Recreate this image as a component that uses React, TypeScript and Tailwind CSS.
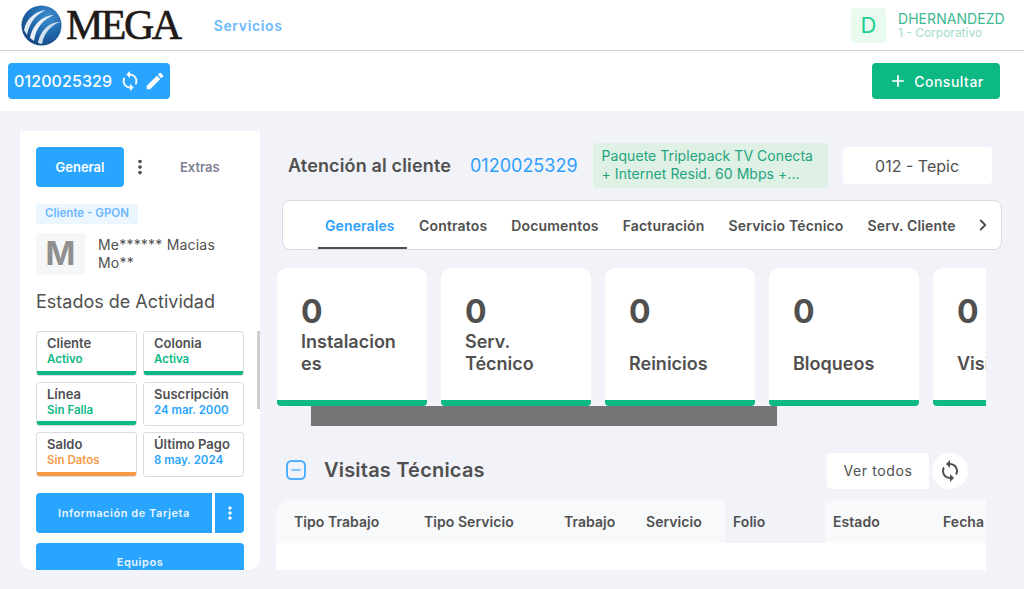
import React from "react";
import { MdSync, MdEdit, MdMoreVert, MdAdd } from "react-icons/md";
import { ChevronRight } from "lucide-react";

function Logo() {
  return (
    <div className="flex items-center">
      <svg width="41" height="41" viewBox="0 0 41 41" className="shrink-0">
        <defs>
          <radialGradient id="g" cx="0.65" cy="0.3" r="0.85">
            <stop offset="0" stopColor="#3f8fd0" />
            <stop offset="0.55" stopColor="#1e63a8" />
            <stop offset="1" stopColor="#123a72" />
          </radialGradient>
        </defs>
        <circle cx="20.5" cy="20.5" r="20" fill="url(#g)" />
        <path d="M3 25C5 15 13 6 25 5C16 9 9 16 6 30Z" fill="#dfe9f3" />
        <path d="M9 33C11 22 19 11 33 10C23 14 15 22 13 36Z" fill="#e8eff6" />
        <path d="M17 38C19 27 27 17 39 17C30 20 23 28 21 39Z" fill="#cfdfee" />
      </svg>
      <span className="ml-[4px] text-[42px] leading-none tracking-[-2.5px] text-[#1f1a17] font-['Liberation_Serif',serif] [-webkit-text-stroke:0.6px_#1f1a17]">MEGA</span>
    </div>
  );
}

function Status({ title, value, color, bar }: { title: string; value: string; color: string; bar?: string }) {
  return (
    <div className="relative h-full overflow-hidden rounded-[3px] border border-[#d8dce3] bg-white pl-[10px] pt-[2px]">
      <div className="text-[13px] font-semibold leading-[18px] text-[#4f5054]">{title}</div>
      <div className={`text-[11.5px] font-semibold leading-[15px] ${color}`}>{value}</div>
      {bar && <div className={`absolute inset-x-0 bottom-0 h-[4px] ${bar}`} />}
    </div>
  );
}

function Card({ n, lines }: { n: string; lines: string[] }) {
  return (
    <div className="flex h-[138px] w-[150px] shrink-0 flex-col overflow-hidden rounded-t-[10px] rounded-b-[4px] bg-white">
      <div className="flex-1 pl-[24px] pt-[26px]">
        <div className="text-[32px] font-bold leading-[36px] text-[#505050]">{n}</div>
        <div className="mt-[1px] h-[44px] text-[18px] font-semibold leading-[22px] text-[#505050]">
          {lines.map((l, i) => (
            <div key={i}>{l || "\u00a0"}</div>
          ))}
        </div>
      </div>
      <div className="h-[6px] shrink-0 bg-[#0cb884]" />
    </div>
  );
}

const tabs = ["Contratos", "Documentos", "Facturación", "Servicio Técnico", "Serv. Cliente"];
const cols: [string, string][] = [
  ["Tipo Trabajo", "w-[130px] pl-[18px] bg-[#f8f9fa] rounded-tl-[14px]"],
  ["Tipo Servicio", "w-[140px] pl-[18px] bg-[#f8f9fa]"],
  ["Trabajo", "w-[82px] pl-[18px] bg-[#f8f9fa]"],
  ["Servicio", "w-[97px] pl-[18px] bg-[#f8f9fa]"],
  ["Folio", "w-[100px] pl-[8px]"],
  ["Estado", "w-[110px] pl-[8px] bg-[#f8f9fa]"],
  ["Fecha", "w-[51px] pl-[8px] bg-[#f8f9fa]"],
];

export default function App() {
  return (
    <div className="flex h-[589px] w-[1024px] flex-col overflow-hidden bg-[#f1f3f8] font-['Inter',sans-serif]">
      <header className="flex h-[51px] shrink-0 items-center border-b border-[#ccd3da] bg-white pl-[21px] pr-[18px]">
        <Logo />
        <span className="ml-[34px] text-[14px] font-semibold tracking-[0.65px] text-[#69b9ff]">Servicios</span>
        <div className="ml-auto flex items-center">
          <div className="flex h-[35px] w-[35px] items-center justify-center rounded-[4px] bg-[#e8fbee] text-[22px] text-[#1fcf92]">D</div>
          <div className="ml-[12px] w-[108px]">
            <div className="text-[14px] leading-[15px] tracking-[0.05px] text-[#3eb795]">DHERNANDEZD</div>
            <div className="text-[12px] leading-[14px] text-[#a2dcc6]">1 - Corporativo</div>
          </div>
        </div>
      </header>

      <div className="flex h-[60px] shrink-0 items-center justify-between bg-white pl-[8px] pr-[24px]">
        <div className="flex h-[36px] w-[162px] items-center rounded-[4px] bg-[#29a4ff] pl-[6px] text-white">
          <span className="text-[16px] font-medium tracking-[0.1px]">0120025329</span>
          <MdSync className="ml-[7px] text-[22px]" />
          <MdEdit className="ml-[3px] text-[22px]" />
        </div>
        <div className="flex h-[36px] w-[128px] items-center justify-center rounded-[4px] bg-[#0cb884] text-white">
          <MdAdd className="text-[20px]" />
          <span className="ml-[6px] text-[14px] font-medium tracking-[0.5px]">Consultar</span>
        </div>
      </div>

      <div className="flex min-h-0 flex-1 pl-[20px] pt-[20px]">
        <aside className="relative mb-[19px] h-[439px] w-[240px] shrink-0 overflow-hidden rounded-b-[12px] bg-white px-[16px] pt-[16px]">
          <div className="flex h-[40px] items-center">
            <div className="flex h-[40px] w-[88px] items-center justify-center rounded-[4px] bg-[#29a4ff] pt-[1px] text-[13px] font-semibold text-white">General</div>
            <MdMoreVert className="ml-[5px] text-[22px] text-[#505050]" />
            <div className="ml-[29px] pt-[1px] text-[13px] font-semibold text-[#7f7f98]">Extras</div>
          </div>
          <div className="mt-[17px] flex h-[20px] w-[102px] items-center justify-center rounded-[3px] bg-[#ecf6ff] text-[11.5px] font-semibold text-[#6cb9ff]">Cliente - GPON</div>
          <div className="mt-[9px] flex">
            <div className="flex h-[42px] w-[49px] items-center justify-center rounded-[3px] bg-[#f5f6f8] text-[32px] font-bold text-[#8f8f8f]">M</div>
            <div className="ml-[13px] w-[125px] pt-[3px] text-[14px] leading-[18px] tracking-[0.2px] text-[#505050]">Me****** Macias Mo**</div>
          </div>
          <div className="mt-[16px] text-[18px] font-normal leading-[22px] text-[#505050]">Estados de Actividad</div>
          <div className="mt-[18px] grid grid-cols-[101px_101px] grid-rows-[45px_44px_45px] gap-x-[6px] gap-y-[6px]">
            <Status title="Cliente" value="Activo" color="text-[#0cb884]" bar="bg-[#0cb884]" />
            <Status title="Colonia" value="Activa" color="text-[#0cb884]" bar="bg-[#0cb884]" />
            <Status title="Línea" value="Sin Falla" color="text-[#0cb884]" bar="bg-[#0cb884]" />
            <Status title="Suscripción" value="24 mar. 2000" color="text-[#29a4ff]" />
            <Status title="Saldo" value="Sin Datos" color="text-[#f79a46]" bar="bg-[#f79a46]" />
            <Status title="Último Pago" value="8 may. 2024" color="text-[#29a4ff]" />
          </div>
          <div className="mt-[16px] flex gap-[3px]">
            <div className="flex h-[40px] w-[176px] items-center justify-center rounded-l-[4px] bg-[#29a4ff] text-[11px] font-semibold tracking-[0.55px] text-[#e8f5ff]">Información de Tarjeta</div>
            <div className="flex h-[40px] w-[29px] items-center justify-center rounded-r-[4px] bg-[#29a4ff] text-white"><MdMoreVert className="text-[20px]" /></div>
          </div>
          <div className="mt-[10px] flex h-[40px] w-[208px] items-center justify-center rounded-[4px] bg-[#29a4ff] pb-[2px] text-[11px] font-semibold tracking-[0.55px] text-[#e8f5ff]">Equipos</div>
          <div className="absolute right-0 top-[200px] h-[78px] w-[3px] bg-[#cdcdcd]" />
        </aside>

        <main className="ml-[16px] w-[710px] min-w-0 shrink-0">
          <div className="mt-[12px] flex h-[45px] items-center whitespace-nowrap pl-[12px]">
            <span className="text-[18px] font-semibold tracking-[0.15px] text-[#505050]">Atención al cliente</span>
            <span className="ml-[19px] text-[18px] text-[#2f9fff]">0120025329</span>
            <div className="ml-[15px] h-[45px] w-[235px] shrink-0 rounded-[4px] bg-[#dff1e5] px-[9px] py-[4px] text-[14px] leading-[18px] tracking-[0.05px] text-[#24a47e]">
              Paquete Triplepack TV Conecta<br />+ Internet Resid. 60 Mbps +...
            </div>
            <div className="ml-[15px] flex h-[37px] w-[149px] shrink-0 items-center justify-center rounded-[4px] bg-white text-[16px] text-[#505050]">012 - Tepic</div>
          </div>

          <div className="relative ml-[6px] mt-[12px] flex h-[50px] w-[720px] rounded-[8px] border border-[#d8dbe0] bg-white pl-[35px] pr-[10px]">
            <div className="flex h-full w-[89px] shrink-0 items-center border-b-2 border-[#505050] pl-[7px] pt-[2px] text-[14px] font-semibold tracking-[0.1px] text-[#2f9fff]">Generales</div>
            {tabs.map((t, i) => (
              <div key={t} className={`flex h-full shrink-0 items-center text-[14px] font-semibold tracking-[0.16px] text-[#505050] ${i === 0 ? "ml-[12px]" : "ml-[24px]"}`}>{t}</div>
            ))}
            <ChevronRight className="absolute right-[9px] top-[15px] h-[18px] w-[18px] text-[#505050]" strokeWidth={2.5} />
          </div>

          <div className="mt-[18px] overflow-hidden">
            <div className="flex gap-[14px] pl-[1px]">
              <Card n="0" lines={["Instalacion", "es"]} />
              <Card n="0" lines={["Serv.", "Técnico"]} />
              <Card n="0" lines={["", "Reinicios"]} />
              <Card n="0" lines={["", "Bloqueos"]} />
              <Card n="0" lines={["", "Visitas"]} />
            </div>
            <div className="ml-[35px] h-[20px] w-[466px] bg-[#757575]" />
          </div>

          <div className="mt-[27px] flex h-[36px] items-center pl-[10px]">
            <div className="mb-[2px] flex items-center">
              <svg width="20" height="20" viewBox="0 0 20 20" fill="none" stroke="#4fb0ff" strokeWidth="2"><rect x="1" y="1" width="18" height="18" rx="4.5" /><path d="M5.5 10h9" strokeWidth="1.4" /></svg>
              <span className="ml-[18px] text-[20px] font-semibold tracking-[0.2px] text-[#505050]">Visitas Técnicas</span>
            </div>
            <div className="ml-auto flex items-center gap-[3px] pr-[18px]">
              <div className="flex h-[36px] w-[102px] items-center justify-center rounded-[4px] bg-white pb-[1px] text-[14px] tracking-[0.6px] text-[#505050]">Ver todos</div>
              <div className="flex h-[36px] w-[36px] items-center justify-center rounded-full bg-white text-[#505050]"><MdSync className="text-[24px]" /></div>
            </div>
          </div>

          <div className="mt-[11px] w-[710px] overflow-hidden">
            <div className="flex h-[43px]">
              {cols.map(([t, c]) => (
                <div key={t} className={`flex shrink-0 items-center overflow-hidden whitespace-nowrap text-[14px] font-semibold tracking-[0.05px] text-[#505050] ${c}`}>{t}</div>
              ))}
            </div>
            <div className="h-[27px] bg-white" />
          </div>
        </main>
      </div>
    </div>
  );
}
